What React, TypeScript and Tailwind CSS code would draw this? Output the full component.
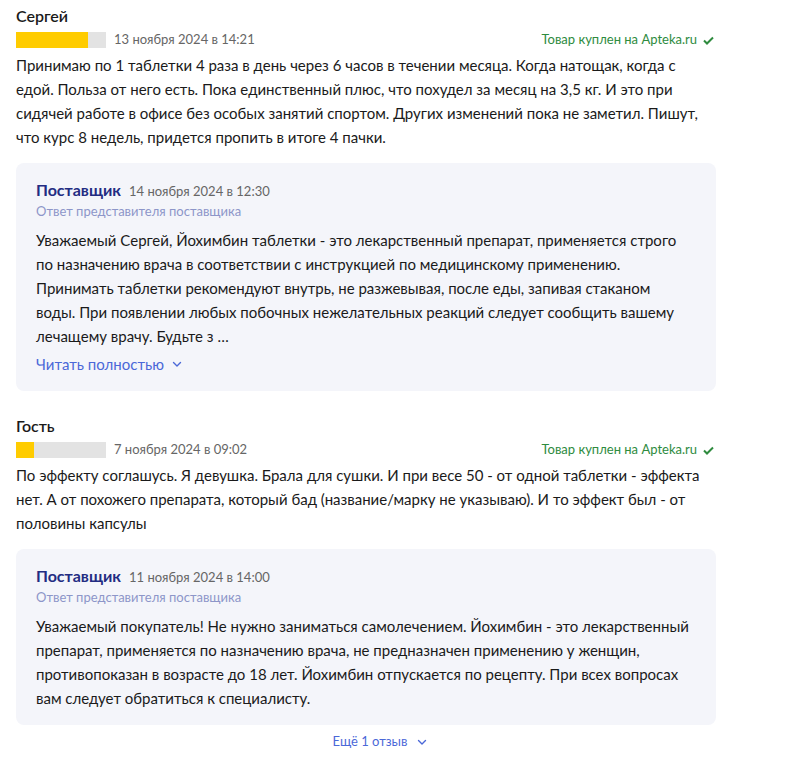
import React from "react";

interface IReply {
    date: string;
    text: string;
    clamped?: boolean;
}

interface IReview {
    name: string;
    rating: number;
    date: string;
    text: string;
    reply: IReply;
}

const reviews: IReview[] = [
    {
        name: "Сергей",
        rating: 4,
        date: "13 ноября 2024 в 14:21",
        text: "Принимаю по 1 таблетки 4 раза в день через 6 часов в течении месяца. Когда натощак, когда с едой. Польза от него есть. Пока единственный плюс, что похудел за месяц на 3,5 кг. И это при сидячей работе в офисе без особых занятий спортом.  Других изменений пока не заметил. Пишут, что курс 8 недель, придется пропить в итоге 4 пачки.",
        reply: {
            date: "14 ноября 2024 в 12:30",
            text: "Уважаемый Сергей, Йохимбин таблетки - это лекарственный препарат, применяется строго по назначению врача в соответствии с инструкцией по медицинскому применению. Принимать таблетки рекомендуют внутрь, не разжевывая, после еды, запивая стаканом воды. При появлении любых побочных нежелательных реакций следует сообщить вашему лечащему врачу. Будьте з …",
            clamped: true,
        },
    },
    {
        name: "Гость",
        rating: 1,
        date: "7 ноября 2024 в 09:02",
        text: "По эффекту соглашусь. Я девушка. Брала для сушки. И при весе 50 - от одной таблетки - эффекта нет. А от похожего препарата, который бад (название/марку не указываю). И то эффект был - от половины капсулы",
        reply: {
            date: "11 ноября 2024 в 14:00",
            text: "Уважаемый покупатель! Не нужно заниматься самолечением. Йохимбин - это лекарственный препарат, применяется по назначению врача, не предназначен применению у женщин, противопоказан в возрасте до 18 лет. Йохимбин отпускается по рецепту. При всех вопросах вам следует обратиться к специалисту.",
        },
    },
];

const Chevron = ({ gap = "ml-2" }: { gap?: string }) => (
    <svg width="10" height="10" viewBox="0 0 10 10" fill="none" className={gap}>
        <path d="M1.5 3.5L5 7l3.5-3.5" stroke="currentColor" strokeWidth="1.4" strokeLinecap="round" strokeLinejoin="round" />
    </svg>
);

const Check = () => (
    <svg width="11" height="9" viewBox="0 0 11 9" fill="none" className="ml-[6px]">
        <path d="M1 4.5L4 7.5L10 1.5" stroke="#2e8b3e" strokeWidth="2" />
    </svg>
);

const Review = ({ review }: { review: IReview }) => {
    return (
        <div className="w-[700px]">
            <p className="text-[16px] leading-[20px] font-semibold text-[#1a1a1a] pt-[6px]">{review.name}</p>

            <div className="flex items-center justify-between mt-[6px] h-[16px]">
                <div className="flex items-center">
                    <div className="w-[90px] h-[16px] bg-[#e3e3e3]">
                        <div className="h-full bg-[#ffcc00]" style={{ width: `${review.rating * 20}%` }} />
                    </div>
                    <span className="ml-[8px] text-[13px] text-[#666]">{review.date}</span>
                </div>
                <div className="flex items-center text-[13px] text-[#2e8b3e] mr-[2px]">
                    Товар куплен на Apteka.ru <Check />
                </div>
            </div>

            <p className="mt-[5px] text-[15px] leading-[24px] text-[#1a1a1a]">{review.text}</p>

            <div className="mt-[14px] bg-[#f4f5fa] rounded-[8px] pl-[20px] pr-[24px] pt-[15px] pb-[15px]">
                <div className="flex items-baseline">
                    <span className="text-[16px] font-bold text-[#232c82]">Поставщик</span>
                    <span className="ml-[8px] text-[13px] text-[#666]">{review.reply.date}</span>
                </div>
                <p className="text-[13px] leading-[18px] text-[#8d96c9]">Ответ представителя поставщика</p>
                <p className="mt-[8px] text-[15px] leading-[24px] text-[#1a1a1a]">{review.reply.text}</p>
                {review.reply.clamped && (
                    <div className="mt-[4px] flex items-center text-[15px] leading-[24px] text-[#4b68d8] cursor-pointer">
                        Читать полностью <Chevron />
                    </div>
                )}
            </div>
        </div>
    );
};

const App = () => {
    return (
        <div className="bg-white min-h-screen px-[16px]" style={{ fontFamily: '"Source Sans Pro", Lato, "Noto Sans", sans-serif' }}>
            <div className="flex flex-col gap-[19px] w-[700px]">
                {reviews.map((r, i) => (
                    <Review key={i} review={r} />
                ))}
            </div>
            <div className="w-[700px] flex justify-center items-center mt-[7px] pl-[28px] text-[13px] text-[#4b68d8]">
                Ещё 1 отзыв <Chevron gap="ml-[10px]" />
            </div>
        </div>
    );
};

export default App;
